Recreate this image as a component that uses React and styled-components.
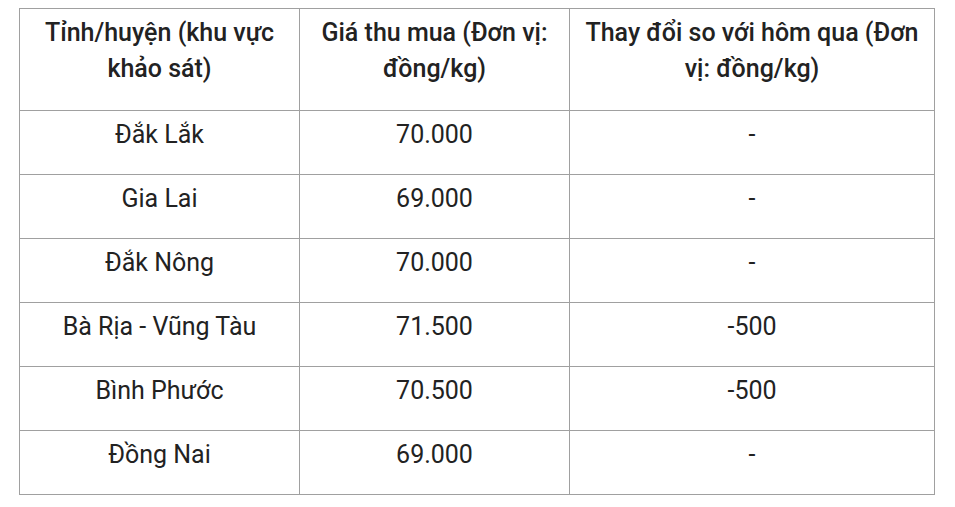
import React from "react";
import styled, { createGlobalStyle } from "styled-components";

const GlobalStyle = createGlobalStyle`
  body {
    margin: 0;
    background: #fff;
    font-family: Roboto, "Liberation Sans", sans-serif;
    color: #222;
  }
`;

const Page = styled.div`
  padding: 8px 21px 0 19px;
`;

const Table = styled.table`
  width: 915px;
  border-collapse: collapse;
  table-layout: fixed;
  font-size: 25px;
  line-height: 36px;
`;

const Cell = styled.td`
  border: 1px solid #a0a0a0;
  padding: 6px 10px ${({ head }) => (head ? "23px" : "21px")};
  text-align: center;
  vertical-align: top;
  font-weight: ${({ head }) => (head ? 500 : 400)};
`;

const rows = [
  ["Đắk Lắk", "70.000", "-"],
  ["Gia Lai", "69.000", "-"],
  ["Đắk Nông", "70.000", "-"],
  ["Bà Rịa - Vũng Tàu", "71.500", "-500"],
  ["Bình Phước", "70.500", "-500"],
  ["Đồng Nai", "69.000", "-"],
];

const App = () => {
  return (
    <>
      <GlobalStyle />
      <Page>
        <Table>
          <colgroup>
            <col style={{ width: 280 }} />
            <col style={{ width: 270 }} />
            <col style={{ width: 365 }} />
          </colgroup>
          <tbody>
            <tr>
              <Cell head>Tỉnh/huyện (khu vực khảo sát)</Cell>
              <Cell head>Giá thu mua (Đơn vị: đồng/kg)</Cell>
              <Cell head>Thay đổi so với hôm qua (Đơn vị: đồng/kg)</Cell>
            </tr>
            {rows.map((r) => (
              <tr key={r[0]}>
                {r.map((v, i) => (
                  <Cell key={i}>{v}</Cell>
                ))}
              </tr>
            ))}
          </tbody>
        </Table>
      </Page>
    </>
  );
};

export default App;
